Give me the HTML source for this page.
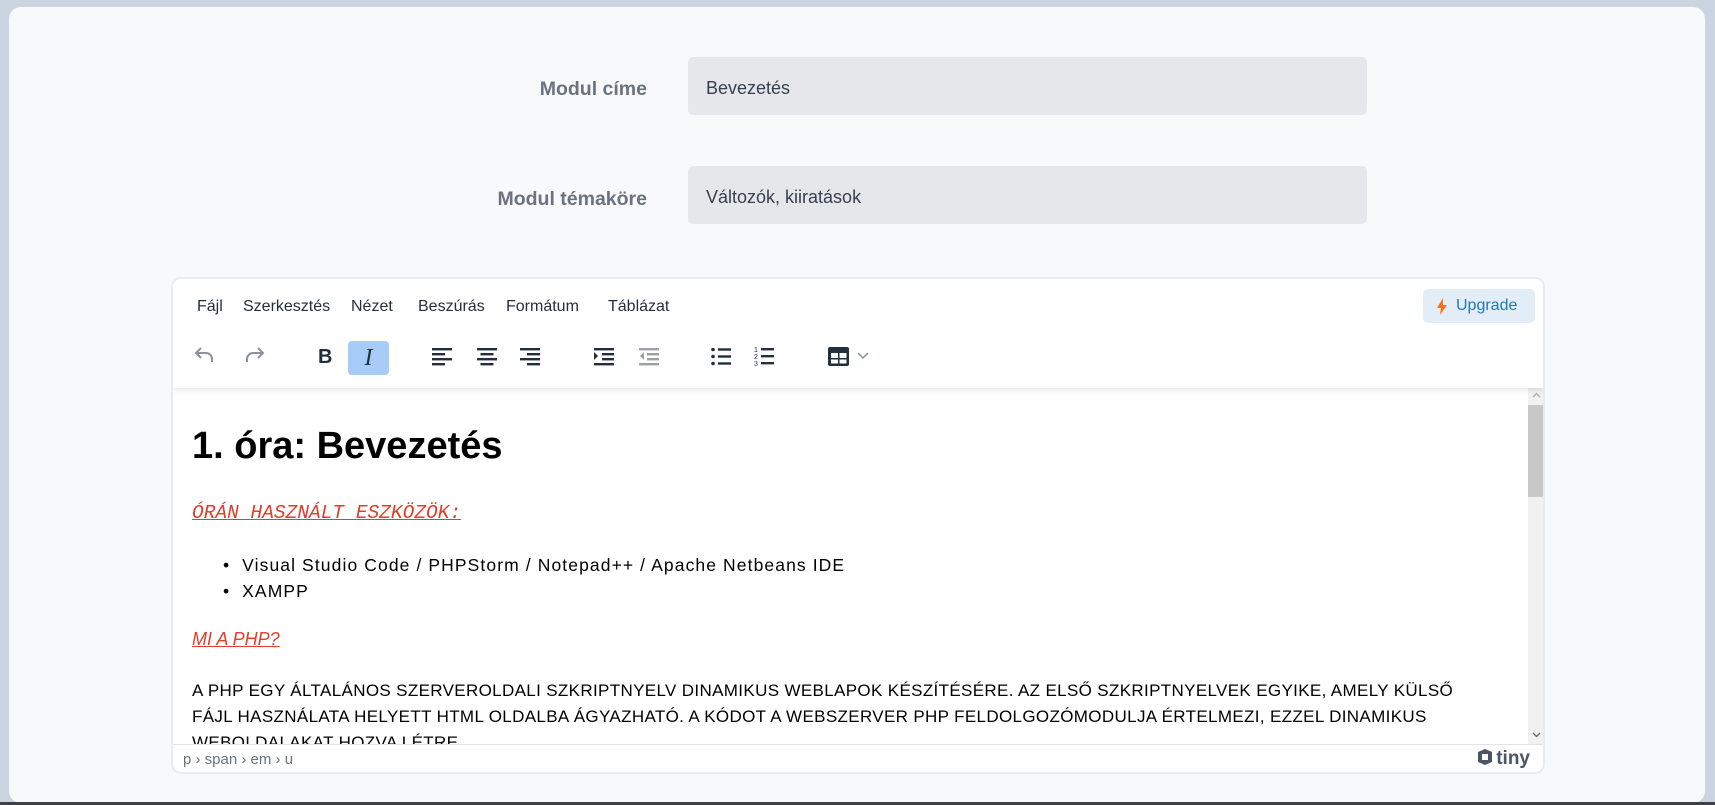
<!DOCTYPE html>
<html><head><meta charset="utf-8"><style>
*{box-sizing:border-box;margin:0;padding:0}
body{width:1715px;height:805px;background:#cbd5e1;font-family:"Liberation Sans",sans-serif;position:relative;overflow:hidden}
.card{position:absolute;left:9px;top:7px;width:1696px;height:796px;background:#f8f9fb;border-radius:12px}
.bot{position:absolute;left:0;top:802px;width:1715px;height:3px;background:#3f3f46}
.lbl{position:absolute;right:1068px;font-weight:bold;color:#6b7280;font-size:19.5px}
.inp{position:absolute;left:688px;width:679px;height:58px;background:#e5e7eb;border-radius:5px;color:#374151;font-size:18px;padding-left:18px;line-height:62px}
.ed{position:absolute;left:171px;top:277px;width:1374px;height:497px;border:2px solid #e9ecef;border-radius:10px;background:#fff;overflow:hidden}
.hdr{position:absolute;left:0;top:0;width:100%;height:109px;box-shadow:0 3px 5px rgba(0,0,0,.08);background:#fff;z-index:2}
.mi{position:absolute;top:19px;font-size:16px;color:#222f3e}
.ic{position:absolute;top:56px}
.up{position:absolute;left:1250px;top:10px;width:112px;height:34px;background:#e3edf7;border-radius:5px;color:#207ab7;font-size:16px;line-height:34px;padding-left:33px}
.cont{position:absolute;left:0;top:109px;width:1354px;height:356px;overflow:hidden;color:#000;font-size:17.5px}
.sb{position:absolute;left:1355px;top:109px;width:17px;height:356px;background:#f1f1f1}
.st{position:absolute;left:0;top:465px;width:100%;height:30px;border-top:1px solid #e3e3e3;font-size:15px;color:#6b7280;padding:6px 0 0 10px}
</style></head><body>
<div class="card"></div><div class="bot"></div>
<div class="lbl" style="top:78px">Modul címe</div>
<div class="inp" style="top:57px">Bevezetés</div>
<div class="lbl" style="top:188px">Modul témaköre</div>
<div class="inp" style="top:166px">Változók, kiiratások</div>
<div class="ed">
 <div class="hdr">
  <span class="mi" style="left:24px">Fájl</span>
  <span class="mi" style="left:70px">Szerkesztés</span>
  <span class="mi" style="left:178px">Nézet</span>
  <span class="mi" style="left:245px">Beszúrás</span>
  <span class="mi" style="left:333px">Formátum</span>
  <span class="mi" style="left:435px">Táblázat</span>
  <div class="up"><svg style="position:absolute;left:14px;top:9px" width="10" height="17" viewBox="0 0 10 17"><path d="M6 0L0 10h4l-1 7 7-10H6z" fill="#f97316"/></svg>Upgrade</div>
  <svg class="ic" style="left:20px;top:65px" width="24" height="24" viewBox="0 0 24 24" fill="none" stroke="#8a929c" stroke-width="2"><path d="M8 4L3 9l5 5M3 9h10a6 6 0 0 1 6 6v3"/></svg>
  <svg class="ic" style="left:69px;top:65px" width="24" height="24" viewBox="0 0 24 24" fill="none" stroke="#8a929c" stroke-width="2"><path d="M16 4l5 5-5 5M21 9H11a6 6 0 0 0-6 6v3"/></svg>
  <span style="position:absolute;left:145px;top:67px;font-weight:bold;font-size:20px;color:#222f3e">B</span>
  <div style="position:absolute;left:175px;top:62px;width:41px;height:34px;background:#a6ccf7;border-radius:4px;font-family:'Liberation Serif',serif;font-style:italic;font-size:24px;color:#222f3e;text-align:center;line-height:34px">I</div>
  <svg class="ic" style="left:259px;top:69px" width="22" height="18"><g fill="#222f3e"><rect y="0" width="20" height="2.4"/><rect y="5" width="13" height="2.4"/><rect y="10" width="20" height="2.4"/><rect y="15" width="13" height="2.4"/></g></svg>
  <svg class="ic" style="left:304px;top:69px" width="22" height="18"><g fill="#222f3e"><rect y="0" width="20" height="2.4"/><rect x="3.5" y="5" width="13" height="2.4"/><rect y="10" width="20" height="2.4"/><rect x="3.5" y="15" width="13" height="2.4"/></g></svg>
  <svg class="ic" style="left:347px;top:69px" width="22" height="18"><g fill="#222f3e"><rect y="0" width="20" height="2.4"/><rect x="7" y="5" width="13" height="2.4"/><rect y="10" width="20" height="2.4"/><rect x="7" y="15" width="13" height="2.4"/></g></svg>
  <svg class="ic" style="left:421px;top:69px" width="22" height="18"><g fill="#222f3e"><rect y="0" width="20" height="2.4"/><rect x="8" y="5" width="12" height="2.4"/><rect x="8" y="10" width="12" height="2.4"/><rect y="15" width="20" height="2.4"/><path d="M0 4l4 4-4 4z"/></g></svg>
  <svg class="ic" style="left:466px;top:69px" width="22" height="18"><g fill="#9aa0a6"><rect y="0" width="20" height="2.4"/><rect x="8" y="5" width="12" height="2.4"/><rect x="8" y="10" width="12" height="2.4"/><rect y="15" width="20" height="2.4"/><path d="M5 4l-4 4 4 4z"/></g></svg>
  <svg class="ic" style="left:538px;top:69px" width="22" height="18"><g fill="#222f3e"><circle cx="2" cy="1.5" r="1.8"/><circle cx="2" cy="8.5" r="1.8"/><circle cx="2" cy="15.5" r="1.8"/><rect x="7" y="0.3" width="13" height="2.4"/><rect x="7" y="7.3" width="13" height="2.4"/><rect x="7" y="14.3" width="13" height="2.4"/></g></svg>
  <svg class="ic" style="left:581px;top:67px" width="22" height="21"><g fill="#222f3e"><text x="0" y="6" font-size="7" font-family="Liberation Sans">1</text><text x="0" y="13" font-size="7" font-family="Liberation Sans">2</text><text x="0" y="20" font-size="7" font-family="Liberation Sans">3</text><rect x="7" y="2" width="13" height="2.4"/><rect x="7" y="9" width="13" height="2.4"/><rect x="7" y="16" width="13" height="2.4"/></g></svg>
  <svg class="ic" style="left:654px;top:67px" width="24" height="22"><rect x="1" y="1" width="21" height="19" rx="2" fill="#222f3e"/><g fill="#fff"><rect x="4" y="7" width="7" height="5"/><rect x="12.5" y="7" width="7" height="5"/><rect x="4" y="13.5" width="7" height="4"/><rect x="12.5" y="13.5" width="7" height="4"/></g></svg>
  <svg class="ic" style="left:684px;top:73px" width="12" height="8"><path d="M1 1l5 5 5-5" fill="none" stroke="#8a929c" stroke-width="1.5"/></svg>
 </div>
 <div class="cont">
  <div style="position:absolute;left:19px;top:37px;font-size:38px;font-weight:bold">1. óra: Bevezetés</div>
  <div style="position:absolute;left:19px;top:114px;font-family:'Liberation Mono',monospace;font-style:italic;text-decoration:underline;color:#e03e2d;font-size:19.5px">ÓRÁN HASZNÁLT ESZKÖZÖK:</div>
  <div style="position:absolute;left:50px;top:164px;line-height:26px;letter-spacing:1.1px">• &nbsp;Visual Studio Code / PHPStorm / Notepad++ / Apache Netbeans IDE<br>• &nbsp;XAMPP</div>
  <div style="position:absolute;left:19px;top:241px;font-style:italic;text-decoration:underline;color:#e03e2d;font-size:18px">MI A PHP?</div>
  <div style="position:absolute;left:19px;top:290px;width:1295px;line-height:26px;font-size:17px;letter-spacing:0.35px">A PHP EGY ÁLTALÁNOS SZERVEROLDALI SZKRIPTNYELV DINAMIKUS WEBLAPOK KÉSZÍTÉSÉRE. AZ ELSŐ SZKRIPTNYELVEK EGYIKE, AMELY KÜLSŐ FÁJL HASZNÁLATA HELYETT HTML OLDALBA ÁGYAZHATÓ. A KÓDOT A WEBSZERVER PHP FELDOLGOZÓMODULJA ÉRTELMEZI, EZZEL DINAMIKUS WEBOLDALAKAT HOZVA LÉTRE.</div>
 </div>
 <div class="sb"><div style="position:absolute;left:0;top:17px;width:17px;height:92px;background:#c8c8c8"></div>
  <svg style="position:absolute;left:4px;top:4px" width="9" height="6"><path d="M1 5l3.5-3.5L8 5" fill="none" stroke="#aaa" stroke-width="1.3"/></svg>
  <svg style="position:absolute;left:4px;top:344px" width="9" height="6"><path d="M1 1l3.5 3.5L8 1" fill="none" stroke="#666" stroke-width="1.3"/></svg></div>
 <div class="st">p › span › em › u
  <span style="position:absolute;right:13px;top:3px;font-weight:bold;font-size:19px;color:#4b5563"><svg width="18" height="18" viewBox="0 0 18 18" style="vertical-align:-2px;margin-right:2px"><path d="M9 1l7 3v10l-7 3-7-3V4z" fill="#4b5563"/><rect x="6" y="6" width="6" height="6" fill="#fff"/></svg>tiny</span></div>
</div>
</body></html>
